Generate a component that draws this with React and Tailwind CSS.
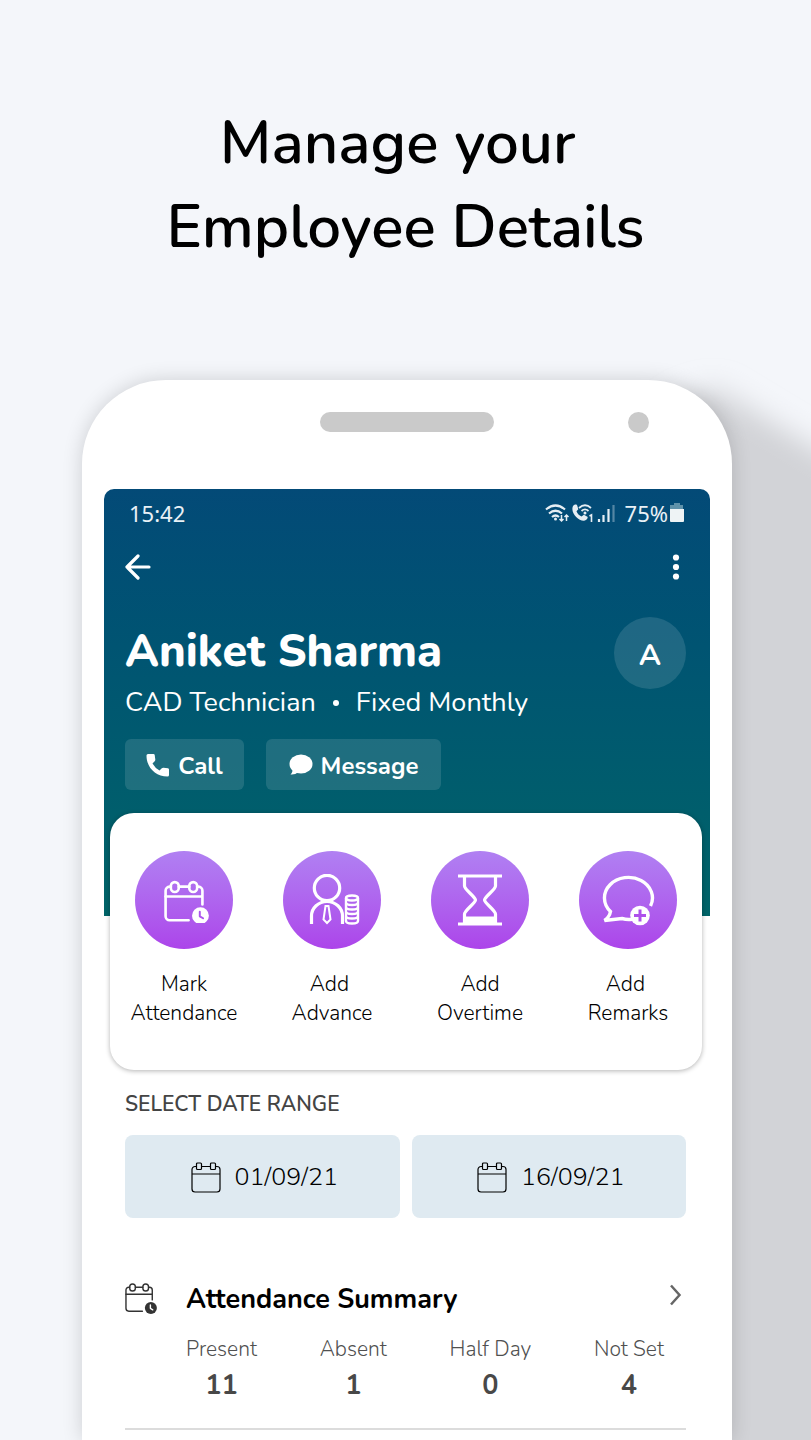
const CalendarBase = ({ round }) => (
  <>
    <path d="M5 4.500H4a3 3 0 0 0-3 3V27a3 3 0 0 0 3 3h14.500" />
    <path d="M11 4.500h8M25 4.500h1a3 3 0 0 1 3 3V18M1 12h28" />
    <rect x="5" y="1" width="6" height="7.500" rx={round ? 3 : 1} />
    <rect x="19" y="1" width="6" height="7.500" rx={round ? 3 : 1} />
  </>
);

function CalendarClock({ className, viewBox = "0 0 34 33", strokeWidth, hand }) {
  return (
    <svg viewBox={viewBox} className={className} fill="none" stroke="currentColor" strokeWidth={strokeWidth} strokeLinecap="round" strokeLinejoin="round" aria-hidden="true">
      <CalendarBase round />
      <circle cx="27.500" cy="26.500" r="6.400" fill="currentColor" stroke="none" />
      <path d="M27 23.500v3.500l2.500 1.500" stroke={hand} strokeWidth="1.500" />
    </svg>
  );
}

function Calendar({ className }) {
  return (
    <svg viewBox="0 0 30 31" className={className} fill="none" stroke="currentColor" strokeWidth="1.200" aria-hidden="true">
      <path d="M5 4.500H4a3 3 0 0 0-3 3V27a3 3 0 0 0 3 3h22a3 3 0 0 0 3-3V7.500a3 3 0 0 0-3-3h-1M11 4.500h8M1 12h28" />
      <rect x="5.500" y="1" width="5" height="6.500" rx="1" />
      <rect x="19.500" y="1" width="5" height="6.500" rx="1" />
    </svg>
  );
}

function Advance() {
  return (
    <svg viewBox="-6 1 56 52" className="h-[52px] w-14" fill="none" stroke="currentColor" strokeWidth="3.200" aria-hidden="true">
      <circle cx="17" cy="15" r="12.700" />
      <path d="M1.500 51V43a15.500 14.500 0 0 1 31 0v8" />
      <path d="M15.500 33h3l2 13.500-3.500 3.500-3.500-3.500z" strokeWidth="2" />
      <g strokeWidth="2.400">
        <ellipse cx="42" cy="25" rx="6" ry="2.500" />
        <path d="M36 25v23c0 3.300 12 3.300 12 0V25M36 29.500c0 3.300 12 3.300 12 0M36 34c0 3.300 12 3.300 12 0M36 38.500c0 3.300 12 3.300 12 0M36 43c0 3.300 12 3.300 12 0" />
      </g>
    </svg>
  );
}

function Hourglass() {
  return (
    <svg viewBox="0 0 44 52" className="h-[52px] w-11" fill="none" stroke="currentColor" strokeWidth="3.200" strokeLinejoin="round" aria-hidden="true">
      <path d="M0 2h44M0 50h44" />
      <path d="M6.500 2v10c0 3.500 11 11 11 14s-11 10.500-11 14v10M37.500 2v10c0 3.500-11 11-11 14s11 10.500 11 14v10" />
      <path d="M6 42.500h32V50H6z" fill="currentColor" stroke="none" />
    </svg>
  );
}

function Remarks() {
  return (
    <svg viewBox="0 0 54 52" className="h-[52px] w-[54px]" fill="none" stroke="currentColor" strokeWidth="3.400" aria-hidden="true">
      <path d="M49.500 32A24 20.500 0 1 0 9.500 37.500Q8.500 43 3.500 46.500L21 44.500Q26 46 31 45.300" />
      <circle cx="39" cy="41.500" r="9.800" fill="currentColor" stroke="none" />
      <path d="M39 35.500v12M33 41.500h12" stroke="#ae50ec" strokeWidth="3" />
    </svg>
  );
}

function StatusIcons() {
  return (
    <svg viewBox="0 0 70 20" className="h-5 w-[70px]" fill="none" stroke="#e6eef4" strokeWidth="2.200" aria-hidden="true">
      <path d="M1 6.500q9.500-8 19 0M4 10.500q6.500-5.500 13 0M7 14q3.500-3 7 0" />
      <circle cx="10.500" cy="16" r="1.500" fill="#e6eef4" stroke="none" />
      <path d="M16.500 12v6M14.500 16l2 2 2-2M21.500 18v-6M19.500 14l2-2 2 2" strokeWidth="1.500" />
      <path d="M28 3c2-2 3.800-1.800 4.300-.3l1 3.500-1.800 2c1 2.600 2.600 4.200 5 5.300l2.400-1.700 3.500 2c1 1-1 3.700-3.300 3.900C33.500 18.200 25 10 28 3z" fill="#e6eef4" stroke="none" />
      <path d="M34 5q6-5.500 12 0M36.500 8q3.500-3.300 7 0" strokeWidth="1.800" />
      <circle cx="40" cy="10" r="1.500" fill="#e6eef4" stroke="none" />
      <path d="M44.500 13l2-1.200V19" strokeWidth="1.600" />
      <path d="M54 19v-3M58.500 19v-7M63.500 19V6" />
      <path d="M68.500 19V2" stroke="#5586a4" />
    </svg>
  );
}

const actions = [
  { first: "Mark", second: "Attendance", icon: <CalendarClock className="h-[45px] w-[50px]" viewBox="-4 -2 38 34" strokeWidth="2" hand="#ad55ee" /> },
  { first: "Add\u00a0", second: "Advance", icon: <Advance /> },
  { first: "Add", second: "Overtime", icon: <Hourglass /> },
  { first: "Add\u00a0", second: "Remarks", icon: <Remarks /> },
];

const stats = [
  ["Present", 11],
  ["Absent", 1],
  ["Half Day", 0],
  ["Not Set", 4],
];

function ProfileHeader() {
  return (
    <header className="h-[427px] rounded-t-[10px] bg-gradient-to-b from-[#034a77] to-[#006468] pl-[21px] pr-6 text-white">
      <div className="flex h-12 items-center justify-between pr-0.5 pl-1 font-['Noto_Sans',sans-serif] text-[22px] text-[#e9f1f6]">
        <span>15:42</span>
        <div className="flex items-center">
          <StatusIcons />
          <span className="ml-2.5">75%</span>
          <svg viewBox="0 0 14 20" className="ml-0.5 h-5 w-3.5" aria-hidden="true">
            <path d="M4 0h6v2h3v4H0V2h4z" fill="#5f92aa" />
            <path d="M0 6h14v12q0 1-1 1H1q-1 0-1-1z" fill="#eef3f5" />
          </svg>
        </div>
      </div>
      <div className="flex h-15 items-center justify-between">
        <button aria-label="Back">
          <svg viewBox="0 0 28 28" className="size-7" fill="none" stroke="currentColor" strokeWidth="3.200" strokeLinecap="round" strokeLinejoin="round" aria-hidden="true">
            <path d="M13 3L2 14l11 11M2 14h22" />
          </svg>
        </button>
        <button aria-label="More options">
          <svg viewBox="0 0 20 28" className="h-7 w-5" fill="currentColor" aria-hidden="true">
            <circle cx="10" cy="4.500" r="3.100" />
            <circle cx="10" cy="14" r="3.100" />
            <circle cx="10" cy="23.500" r="3.100" />
          </svg>
        </button>
      </div>
      <div className="mt-5 flex items-start justify-between">
        <h2 className="text-[45px] leading-[70px] font-extrabold">Aniket Sharma</h2>
        <span className="flex size-[72px] items-center justify-center rounded-full bg-white/12 pt-1 text-[30px] font-bold">A</span>
      </div>
      <p className="flex h-7 items-center text-[27px]">
        <span>CAD Technician</span>
        <span className="mx-[17px] size-[6px] rounded-full bg-white" />
        <span>Fixed Monthly</span>
      </p>
      <div className="mt-[22px] flex gap-[22px] text-[24px] font-bold">
        <button className="flex h-[51px] w-[119px] items-center justify-center gap-2 rounded-md bg-white/12">
          <svg viewBox="0 0 24 24" className="size-6" fill="currentColor" aria-hidden="true">
            <path d="M2 1h5.500q1 0 1.200 1l.6 4.500q.1 1-.6 1.700L6.500 10.500q2.500 4.500 7 7l2.300-2.200q.7-.7 1.700-.6l4.500.6q1 .2 1 1.200V22q0 1.500-1.500 1.500C9.500 23.500.5 14.500.5 2.500Q.5 1 2 1z" />
          </svg>
          <span className="pt-0.5">Call</span>
        </button>
        <button className="flex h-[51px] w-[175px] items-center justify-center gap-2 rounded-md bg-white/12">
          <svg viewBox="0 0 24 24" className="size-6" fill="currentColor" aria-hidden="true">
            <ellipse cx="12" cy="11" rx="11.500" ry="9.500" />
            <path d="M3.500 15Q4 19 1.500 21.500q4.500.5 8-2.500z" />
          </svg>
          <span className="pt-0.5">Message</span>
        </button>
      </div>
    </header>
  );
}

export default function App() {
  return (
    <div className="relative isolate flex min-h-screen flex-col overflow-hidden bg-[#f4f6fa] font-['Nunito','Open_Sans',sans-serif] text-black">
      <svg className="absolute top-[340px] right-0 -z-10 h-[1200px] w-[180px]" viewBox="0 0 180 1200" aria-hidden="true">
        <defs>
          <filter id="soft" x="-50%" y="-10%" width="200%" height="120%">
            <feGaussianBlur stdDeviation="14" />
          </filter>
        </defs>
        <path d="M50 60L84 48L250 148V1300H0V100z" fill="#d2d3d7" filter="url(#soft)" />
      </svg>
      <h1 className="pt-[101px] text-center text-[60px] leading-[84px] font-semibold">
        Manage your&nbsp;
        <br />
        Employee Details
      </h1>
      <main className="mt-[111px] mr-[79px] ml-[82px] flex-1 rounded-t-[84px] bg-white px-[22px] shadow-[0_0_20px_rgba(0,0,0,0.16)]">
        <div className="grid h-[109px] grid-cols-[1fr_auto_1fr] items-start pt-8">
          <span className="col-start-2 h-5 w-[174px] rounded-full bg-[#cacaca]" />
          <span className="mr-[61px] size-[21px] justify-self-end rounded-full bg-[#cacaca]" />
        </div>
        <ProfileHeader />
        <nav className="relative -mt-[103px] mr-2 ml-1.5 grid grid-cols-4 rounded-3xl bg-white pt-[38px] pb-[42px] shadow-[0_1px_5px_rgba(0,0,0,0.3)]">
          {actions.map(({ first, second, icon }) => (
            <button key={second} className="flex flex-col items-center">
              <span className="flex size-[98px] items-center justify-center rounded-full bg-gradient-to-b from-[#b080f2] to-[#ac44ea] text-white">{icon}</span>
              <span className="mt-[21px] text-[21px] leading-[29px] font-light">
                {first}
                <br />
                {second}
              </span>
            </button>
          ))}
        </nav>
        <div className="mr-6 ml-[21px]">
          <h3 className="mt-[19px] text-[21px] leading-[30px] font-semibold text-[#444]">SELECT DATE RANGE</h3>
          <div className="mt-4 grid grid-cols-2 gap-3">
            {["01/09/21", "16/09/21"].map((date) => (
              <button key={date} className="flex h-[83px] items-center justify-center gap-3.5 rounded-lg bg-[#dfeaf1] pt-0.5 pl-1 text-[25px] font-light">
                <Calendar className="h-[31px] w-[30px]" />
                {date}
              </button>
            ))}
          </div>
          <section className="mt-[62px] border-b-2 border-[#dcdcdc] pb-[21px]">
            <div className="flex h-9 items-center">
              <CalendarClock className="h-[31px] w-8 text-[#333]" strokeWidth="1.500" hand="#fff" />
              <h3 className="ml-[29px] flex-1 pt-1 text-[27px] font-bold">Attendance Summary</h3>
              <button aria-label="Open attendance summary" className="self-start pt-1 text-[#666]">
                <svg viewBox="0 0 22 22" className="size-[22px]" fill="none" stroke="currentColor" strokeWidth="2.500" aria-hidden="true">
                  <path d="M7 1.500L15.500 11L7 20.500" />
                </svg>
              </button>
            </div>
            <dl className="mt-[17px] mr-[22px] ml-[61px] flex justify-between text-center text-[#505050]">
              {stats.map(([label, value]) => (
                <div key={label}>
                  <dt className="text-[21px] leading-8 font-light">{label}</dt>
                  <dd className="text-[27px] leading-[42px] font-bold text-[#484848]">{value}</dd>
                </div>
              ))}
            </dl>
          </section>
        </div>
      </main>
    </div>
  );
}
